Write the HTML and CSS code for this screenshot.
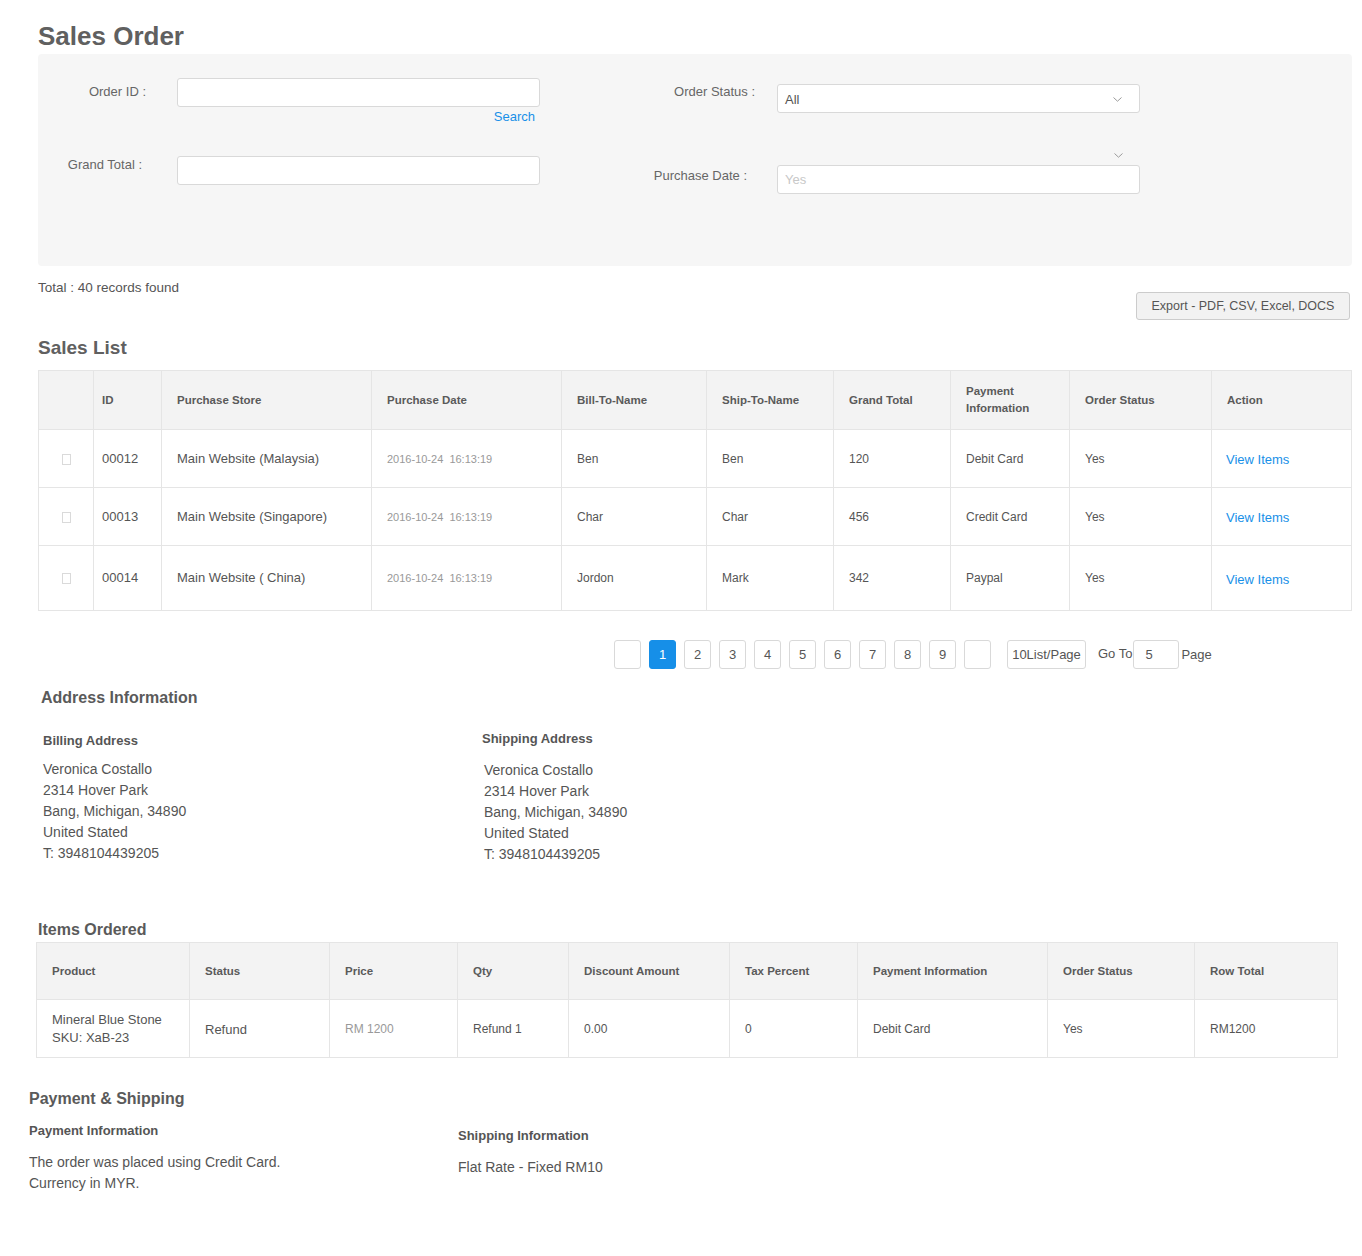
FILE: index.html
```html
<!DOCTYPE html>
<html lang="en">
<head>
<meta charset="utf-8">
<title>Sales Order</title>
<link rel="stylesheet" href="styles.css">
</head>
<body>
<div class="page">
  <h1 class="title">Sales Order</h1>

  <section class="filters">
    <div class="fcol fcol-left">
      <div class="field f-order">
        <label class="flabel">Order ID :</label>
        <div class="fctrl">
          <input class="input" type="text">
          <div class="search-row"><a class="link">Search</a></div>
        </div>
      </div>
      <div class="field f-grand">
        <label class="flabel">Grand Total :</label>
        <div class="fctrl"><input class="input" type="text"></div>
      </div>
    </div>
    <div class="fcol fcol-right">
      <div class="field f-status">
        <label class="flabel">Order Status :</label>
        <div class="fctrl">
          <div class="select"><span>All</span>
            <svg class="chev" width="9" height="5" viewBox="0 0 9 5"><polyline points="0.5,0.5 4.5,4.2 8.5,0.5" fill="none" stroke="#9a9a9a" stroke-width="1"/></svg>
          </div>
        </div>
      </div>
      <div class="stray">
        <svg class="chev" width="9" height="5" viewBox="0 0 9 5"><polyline points="0.5,0.5 4.5,4.2 8.5,0.5" fill="none" stroke="#9a9a9a" stroke-width="1"/></svg>
      </div>
      <div class="field f-date">
        <label class="flabel">Purchase Date :</label>
        <div class="fctrl"><input class="input" type="text" placeholder="Yes"></div>
      </div>
    </div>
  </section>

  <div class="listbar">
    <div class="total">Total : 40 records found</div>
    <button class="btn-export" type="button">Export - PDF, CSV, Excel, DOCS</button>
  </div>

  <h2 class="sec-title">Sales List</h2>

  <table class="grid sales">
    <colgroup>
      <col style="width:55px"><col style="width:68px"><col style="width:210px"><col style="width:190px"><col style="width:145px"><col style="width:127px"><col style="width:117px"><col style="width:119px"><col style="width:142px"><col style="width:140px">
    </colgroup>
    <thead>
      <tr class="h-row">
        <th></th><th class="c-id">ID</th><th>Purchase Store</th><th>Purchase Date</th><th>Bill-To-Name</th><th>Ship-To-Name</th><th>Grand Total</th><th>Payment<br>Information</th><th>Order Status</th><th>Action</th>
      </tr>
    </thead>
    <tbody>
      <tr class="b-row">
        <td class="c-check"><span class="checkbox"></span></td><td class="c-id">00012</td><td class="c-store">Main Website (Malaysia)</td><td class="c-date">2016-10-24&nbsp;&nbsp;16:13:19</td><td>Ben</td><td>Ben</td><td>120</td><td>Debit Card</td><td>Yes</td><td class="c-action"><a class="link">View Items</a></td>
      </tr>
      <tr class="b-row">
        <td class="c-check"><span class="checkbox"></span></td><td class="c-id">00013</td><td class="c-store">Main Website (Singapore)</td><td class="c-date">2016-10-24&nbsp;&nbsp;16:13:19</td><td>Char</td><td>Char</td><td>456</td><td>Credit Card</td><td>Yes</td><td class="c-action"><a class="link">View Items</a></td>
      </tr>
      <tr class="b-row b-row-last">
        <td class="c-check"><span class="checkbox"></span></td><td class="c-id">00014</td><td class="c-store">Main Website ( China)</td><td class="c-date">2016-10-24&nbsp;&nbsp;16:13:19</td><td>Jordon</td><td>Mark</td><td>342</td><td>Paypal</td><td>Yes</td><td class="c-action"><a class="link">View Items</a></td>
      </tr>
    </tbody>
  </table>

  <nav class="pager">
    <span class="pg"></span>
    <span class="pg active">1</span>
    <span class="pg">2</span>
    <span class="pg">3</span>
    <span class="pg">4</span>
    <span class="pg">5</span>
    <span class="pg">6</span>
    <span class="pg">7</span>
    <span class="pg">8</span>
    <span class="pg">9</span>
    <span class="pg"></span>
    <span class="pg pg-size">10List/Page</span>
    <span class="pg-text goto">Go To</span>
    <span class="pg pg-input">5</span>
    <span class="pg-text">Page</span>
  </nav>

  <h3 class="sub-title addr-title">Address Information</h3>
  <div class="two-col addr">
    <div class="block">
      <h4 class="block-title">Billing Address</h4>
      <div class="lines">
        <div>Veronica Costallo</div>
        <div>2314 Hover Park</div>
        <div>Bang, Michigan, 34890</div>
        <div>United Stated</div>
        <div>T: 3948104439205</div>
      </div>
    </div>
    <div class="block block-ship">
      <h4 class="block-title">Shipping Address</h4>
      <div class="lines">
        <div>Veronica Costallo</div>
        <div>2314 Hover Park</div>
        <div>Bang, Michigan, 34890</div>
        <div>United Stated</div>
        <div>T: 3948104439205</div>
      </div>
    </div>
  </div>

  <h3 class="sub-title items-title">Items Ordered</h3>
  <table class="grid items">
    <colgroup>
      <col style="width:153px"><col style="width:140px"><col style="width:128px"><col style="width:111px"><col style="width:161px"><col style="width:128px"><col style="width:190px"><col style="width:147px"><col style="width:143px">
    </colgroup>
    <thead>
      <tr class="h-row">
        <th>Product</th><th>Status</th><th>Price</th><th>Qty</th><th>Discount Amount</th><th>Tax Percent</th><th>Payment Information</th><th>Order Status</th><th>Row Total</th>
      </tr>
    </thead>
    <tbody>
      <tr class="i-row">
        <td class="c-product">Mineral Blue Stone<br>SKU: XaB-23</td><td class="c-status">Refund</td><td class="c-price">RM 1200</td><td>Refund 1</td><td>0.00</td><td>0</td><td>Debit Card</td><td>Yes</td><td>RM1200</td>
      </tr>
    </tbody>
  </table>

  <h3 class="sub-title pay-title">Payment &amp; Shipping</h3>
  <div class="two-col pay">
    <div class="block">
      <h4 class="block-title">Payment Information</h4>
      <div class="lines">
        <div>The order was placed using Credit Card.</div>
        <div>Currency in MYR.</div>
      </div>
    </div>
    <div class="block block-shipinfo">
      <h4 class="block-title">Shipping Information</h4>
      <div class="lines">
        <div>Flat Rate - Fixed RM10</div>
      </div>
    </div>
  </div>
</div>
</body>
</html>
```

FILE: styles.css
```css
* { box-sizing: border-box; }

html, body {
  margin: 0;
  padding: 0;
  background: #ffffff;
}

body {
  font-family: "Liberation Sans", Arial, sans-serif;
  color: #555555;
  font-size: 13px;
}

.page {
  padding: 20px 10px 40px 38px;
  width: 1362px;
}

.title {
  margin: 0 0 2px 0;
  font-size: 26px;
  line-height: 32px;
  font-weight: bold;
  color: #606060;
}

/* ---------- filter panel ---------- */
.filters {
  display: flex;
  background: #f6f6f6;
  border-radius: 4px;
  min-height: 212px;
}

.fcol-left {
  width: 522px;
  padding-top: 24px;
}

.fcol-right {
  padding-top: 30px;
}

.field {
  display: flex;
  align-items: flex-start;
}

.flabel {
  display: block;
  text-align: right;
  font-size: 13px;
  line-height: 18px;
  color: #666666;
  flex: none;
}

.fcol-left .flabel {
  width: 108px;
  margin-right: 31px;
}

.fcol-right .flabel {
  width: 195px;
  margin-right: 22px;
}

.f-order .flabel { padding-top: 5px; }
.f-grand { margin-top: 32px; }
.f-grand .flabel { padding-right: 4px; }
.f-status .flabel { margin-top: -1px; }
.f-date { margin-top: 5px; }
.f-date .flabel { padding-right: 8px; padding-top: 2px; }

.fctrl {
  width: 363px;
}

.input {
  display: block;
  width: 363px;
  height: 29px;
  margin: 0;
  padding: 0 7px;
  border: 1px solid #d9d9d9;
  border-radius: 3px;
  background: #ffffff;
  font-family: "Liberation Sans", Arial, sans-serif;
  font-size: 13px;
  color: #555555;
  outline: none;
}

.input::placeholder {
  color: #c8c8c8;
}

.search-row {
  text-align: right;
  padding-right: 5px;
  margin-top: 3px;
  line-height: 14px;
}

.link {
  color: #1890e8;
  font-size: 13px;
  text-decoration: none;
  cursor: pointer;
}

.select {
  display: flex;
  align-items: center;
  justify-content: space-between;
  width: 363px;
  height: 29px;
  padding: 2px 17px 0 7px;
  border: 1px solid #d9d9d9;
  border-radius: 3px;
  background: #ffffff;
  font-size: 13px;
  color: #555555;
}

.chev { display: block; }

.stray {
  display: flex;
  justify-content: flex-end;
  width: 363px;
  height: 10px;
  margin: 37px 0 0 217px;
  padding: 3px 17px 0 0;
}

/* ---------- list bar ---------- */
.listbar {
  display: flex;
  justify-content: space-between;
  align-items: flex-start;
  margin-top: 13px;
}

.total {
  font-size: 13.5px;
  line-height: 18px;
  color: #555555;
}

.btn-export {
  margin: 13px 2px 0 0;
  width: 214px;
  height: 28px;
  padding: 0;
  background: #f2f2f2;
  border: 1px solid #cccccc;
  border-radius: 3px;
  font-family: "Liberation Sans", Arial, sans-serif;
  font-size: 12.5px;
  color: #555555;
}

.sec-title {
  margin: 16px 0 10px 0;
  font-size: 19px;
  line-height: 24px;
  font-weight: bold;
  color: #606060;
}

/* ---------- tables ---------- */
.grid {
  border-collapse: collapse;
  table-layout: fixed;
}

.grid th,
.grid td {
  border: 1px solid #e5e5e5;
  padding: 0 8px 0 15px;
  text-align: left;
  vertical-align: middle;
}

.grid th {
  background: #f3f3f3;
  font-weight: bold;
  font-size: 11.5px;
  line-height: 17px;
  color: #5a5a5a;
}

.grid td {
  font-size: 12px;
  line-height: 18px;
  color: #555555;
}

.sales { width: 1313px; }
.sales .h-row { height: 59px; }
.sales .b-row { height: 58px; }
.sales .b-row-last { height: 65px; }

.sales .c-id { padding-left: 8px; }
.sales td.c-id,
.sales td.c-store { font-size: 13px; }
.sales td.c-date { font-size: 11px; color: #999999; }
.sales td.c-action { padding-left: 14px; padding-top: 3px; }
.sales td.c-check { padding: 0; text-align: center; }

.checkbox {
  display: inline-block;
  width: 9px;
  height: 11px;
  border: 1px solid #dadada;
  vertical-align: middle;
}

/* ---------- pager ---------- */
.pager {
  display: flex;
  align-items: center;
  margin-top: 29px;
  padding-left: 576px;
  height: 29px;
}

.pg {
  display: flex;
  align-items: center;
  justify-content: center;
  width: 27px;
  height: 29px;
  margin-right: 8px;
  border: 1px solid #d9d9d9;
  border-radius: 3px;
  background: #ffffff;
  font-size: 13px;
  color: #555555;
}

.pg.active {
  background: #168fe8;
  border-color: #168fe8;
  color: #ffffff;
}

.pg:nth-child(11) { margin-right: 16px; }

.pg-size {
  width: 79px;
  margin-right: 12px;
}

.pg-text {
  font-size: 13px;
  color: #555555;
}

.goto { margin-right: 1px; margin-top: -2px; }

.pg-input {
  width: 46px;
  justify-content: flex-start;
  padding-left: 11px;
  margin-right: 2px;
}

/* ---------- info sections ---------- */
.sub-title {
  margin: 0;
  font-size: 16px;
  line-height: 20px;
  font-weight: bold;
  color: #5a5a5a;
}

.addr-title { margin: 19px 0 0 3px; }

.two-col {
  display: grid;
}

.addr {
  grid-template-columns: 439px 1fr;
  margin: 23px 0 0 5px;
}

.block-title {
  margin: 0;
  font-size: 13px;
  line-height: 20px;
  font-weight: bold;
  color: #555555;
}

.lines {
  font-family: "Liberation Sans", Arial, sans-serif;
  font-size: 14px;
  line-height: 21px;
  color: #555555;
}

.addr .lines { margin-top: 8px; }
.addr .block-ship { margin-top: -2px; }
.addr .block-ship .lines { margin: 11px 0 0 2px; }

.items-title { margin: 55px 0 2px 0; }

.items {
  width: 1301px;
  margin-left: -2px;
}

.items .h-row { height: 57px; }
.items .i-row { height: 58px; }
.items td.c-product { font-size: 13px; line-height: 18px; }
.items td.c-status { font-size: 13px; padding-top: 2px; }
.items td.c-price { color: #999999; }

.pay-title { margin: 31px 0 0 -9px; }

.pay {
  grid-template-columns: 429px 1fr;
  margin: 12px 0 0 -9px;
}

.pay .lines { margin-top: 11px; }
.pay .block-shipinfo { margin-top: 5px; }
```
